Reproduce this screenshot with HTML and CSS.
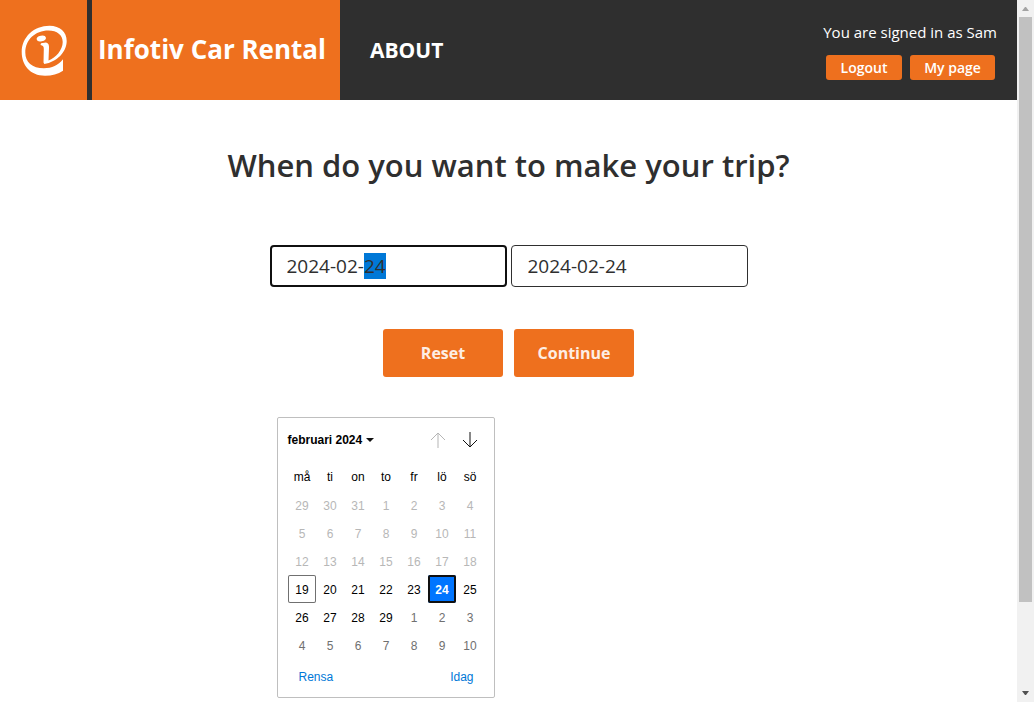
FILE: index.html
```html
<!DOCTYPE html>
<html lang="sv">
<head>
<meta charset="utf-8">
<title>Infotiv Car Rental</title>
<link rel="stylesheet" href="styles.css">
</head>
<body>
<div class="page">
  <header class="header">
    <a class="logo" href="#" aria-label="Infotiv">
      <svg class="logo-mark" viewBox="20 24 48 52" aria-hidden="true">
        <path fill="#fff" d="M63 59.300V70.700C58 74 52 75.700 45 75.700C30 75.700 21.700 65 21.700 52C21.700 37 34 25.700 49.500 25.700C60 25.700 66.700 32 66.700 41C66.700 52 57 62 44.300 64L43.500 62.500L43.800 49C43.800 46.500 43 45.300 40.500 45L41 43.300L46 42.500C48.500 43 49.200 45 49 48L48.500 60.500C56 57.500 62.700 50 62.700 42C62.700 35 57 30.500 48.500 30.500C35 30.500 25.300 40 25.300 52.500C25.300 62 32 68.300 44 68.300C52 68.300 58 65.500 63 59.300Z"/>
        <ellipse cx="41.300" cy="38.500" rx="4.700" ry="2.900" fill="#fff" transform="rotate(-12 41.3 38.5)"/>
      </svg>
    </a>
    <a class="brand" href="#">Infotiv Car Rental</a>
    <nav class="nav"><a class="nav-link" href="#">ABOUT</a></nav>
    <div class="user">
      <p class="welcome">You are signed in as Sam</p>
      <div class="user-actions">
        <button class="small-button logout" type="button">Logout</button>
        <button class="small-button my-page" type="button">My page</button>
      </div>
    </div>
  </header>
  <main class="main">
    <h1 class="title">When do you want to make your trip?</h1>
    <form class="trip">
      <div class="dates">
        <input class="date" id="start" type="text" value="2024-02-24" aria-label="Start date">
        <input class="date" id="end" type="text" value="2024-02-24" aria-label="End date">
        <section class="calendar" aria-label="februari 2024">
          <div class="cal-head">
            <button class="cal-month" type="button">februari 2024<span class="caret"></span></button>
            <button class="cal-arrow" type="button" aria-label="Previous month" disabled>
              <svg class="arrow" viewBox="0 0 16 16"><path d="M8 16V1M1 8L8 1L15 8"/></svg>
            </button>
            <button class="cal-arrow" type="button" aria-label="Next month">
              <svg class="arrow" viewBox="0 0 16 16"><path d="M8 0V15M1 8L8 15L15 8"/></svg>
            </button>
          </div>
          <table class="days">
            <thead><tr><th>må</th><th>ti</th><th>on</th><th>to</th><th>fr</th><th>lö</th><th>sö</th></tr></thead>
            <tbody>
              <tr class="off"><td>29</td><td>30</td><td>31</td><td>1</td><td>2</td><td>3</td><td>4</td></tr>
              <tr class="off"><td>5</td><td>6</td><td>7</td><td>8</td><td>9</td><td>10</td><td>11</td></tr>
              <tr class="off"><td>12</td><td>13</td><td>14</td><td>15</td><td>16</td><td>17</td><td>18</td></tr>
              <tr><td class="today">19</td><td>20</td><td>21</td><td>22</td><td>23</td><td class="selected">24</td><td>25</td></tr>
              <tr><td>26</td><td>27</td><td>28</td><td>29</td><td class="next">1</td><td class="next">2</td><td class="next">3</td></tr>
              <tr class="next"><td>4</td><td>5</td><td>6</td><td>7</td><td>8</td><td>9</td><td>10</td></tr>
            </tbody>
          </table>
          <div class="cal-foot">
            <button class="cal-link" type="button">Rensa</button>
            <button class="cal-link" type="button">Idag</button>
          </div>
        </section>
      </div>
      <div class="actions">
        <button class="big-button" type="button">Reset</button>
        <button class="big-button" type="button">Continue</button>
      </div>
    </form>
  </main>
</div>
<div class="scrollbar" aria-hidden="true">
  <svg class="scroll-arrow" viewBox="0 0 17 17"><path fill="#a3a3a3" d="M5 11L8 7H9L12 11Z"/></svg>
  <div class="track"><div class="thumb"></div></div>
  <svg class="scroll-arrow" viewBox="0 0 17 17"><path fill="#505050" d="M5 6H12L9 10H8Z"/></svg>
</div>
<script src="script.js"></script>
</body>
</html>
```
FILE: styles.css
```css
* { box-sizing: border-box; }
body {
  margin: 0;
  display: flex;
  height: 100vh;
  overflow: hidden;
  background: #fff;
  color: #2f2f2f;
  font-family: "Trebuchet MS", "Open Sans", sans-serif;
}
a { color: inherit; text-decoration: none; }
button { margin: 0; padding: 0; border: 0; font: inherit; color: inherit; background: none; }
.page { flex: 1; min-width: 0; }

.header { display: flex; height: 100px; background: #2f2f2f; color: #fff; }
.logo {
  display: flex;
  align-items: center;
  justify-content: center;
  width: 87px;
  margin-right: 5px;
  background: #ee701e;
}
.logo-mark { width: 48px; height: 52px; }
.brand {
  width: 248px;
  padding-left: 6px;
  background: #ee701e;
  font-size: 26px;
  font-weight: 700;
  line-height: 98px;
  white-space: nowrap;
}
.nav { flex: 1; padding-left: 30px; }
.nav-link { font-size: 21px; font-weight: 700; line-height: 100px; }
.user { padding: 21px 20px 0 0; text-align: right; }
.welcome { margin: 0 0 12px; font-size: 15px; line-height: 22px; }
.user-actions { display: flex; justify-content: flex-end; gap: 8px; padding-right: 2px; }
.small-button {
  height: 25px;
  border-radius: 3px;
  background: #ee701e;
  font-size: 14px;
  font-weight: 600;
  line-height: 25px;
}
.logout { width: 76px; }
.my-page { width: 85px; }

.title {
  margin: 43px 0 0;
  font-size: 31px;
  font-weight: 600;
  line-height: 44px;
  text-align: center;
}
.trip { display: flex; flex-direction: column; align-items: center; gap: 42px; margin-top: 58px; }
.dates { position: relative; display: flex; gap: 4px; }
.date {
  width: 237px;
  height: 42px;
  padding: 0 16px;
  border: 1px solid #2f2f2f;
  border-radius: 4px;
  outline: 0;
  background: #fff;
  color: #2f2f2f;
  font: inherit;
  font-size: 19px;
}
.date:focus { padding: 0 15px; border: 2px solid #101010; }
.date::selection { background: #0078d7; color: #2f2f2f; }
.actions { display: flex; gap: 11px; }
.big-button {
  width: 120px;
  height: 48px;
  border-radius: 3px;
  background: #ee701e;
  color: #fdeee4;
  font-size: 16px;
  font-weight: 700;
}

.calendar {
  position: absolute;
  top: 172px;
  left: 7px;
  width: 218px;
  padding: 7px 10px 4px;
  border: 1px solid #bfbfbf;
  border-radius: 2px;
  background: #fff;
  color: #000;
  font-family: "Liberation Sans", sans-serif;
  font-size: 12px;
}
.cal-head { display: flex; align-items: center; height: 30px; margin-bottom: 8px; }
.cal-month { display: flex; align-items: center; gap: 4px; margin-right: auto; font-weight: 700; }
.caret { border: 4px solid transparent; border-top-color: #101010; border-bottom: 0; }
.cal-arrow { display: flex; justify-content: center; width: 32px; }
.cal-arrow:last-child { margin-right: -2px; }
.cal-arrow:disabled { opacity: 0.3; }
.arrow { width: 16px; height: 16px; fill: none; stroke: #101010; stroke-width: 1; }
.days { border-collapse: collapse; table-layout: fixed; width: 196px; text-align: center; }
.days th { height: 28px; padding: 0 0 0 1px; font-weight: 400; }
.days td { height: 28px; padding: 2px 0 0 1px; }
.off { color: #b7b7b7; }
.next { color: #707070; }
.days .today { box-shadow: inset 0 0 0 1px #707070; border-radius: 2px; }
.days .selected {
  background: #0075ff;
  box-shadow: inset 0 0 0 2px #101010;
  border-radius: 2px;
  color: #fff;
  font-weight: 700;
}
.cal-foot { display: flex; justify-content: space-between; padding: 0 10px 0 11px; }
.cal-link { height: 34px; padding-top: 1px; color: #0078d7; }

.scrollbar { display: flex; flex-direction: column; width: 17px; background: #f1f1f1; }
.scroll-arrow { width: 17px; height: 17px; }
.track { flex: 1; padding: 0 2px; }
.thumb { height: calc(88% - 3px); background: #c1c1c1; }
```
FILE: script.js
```js
const start = document.getElementById("start");
start.focus();
start.setSelectionRange(8, 10);
```
